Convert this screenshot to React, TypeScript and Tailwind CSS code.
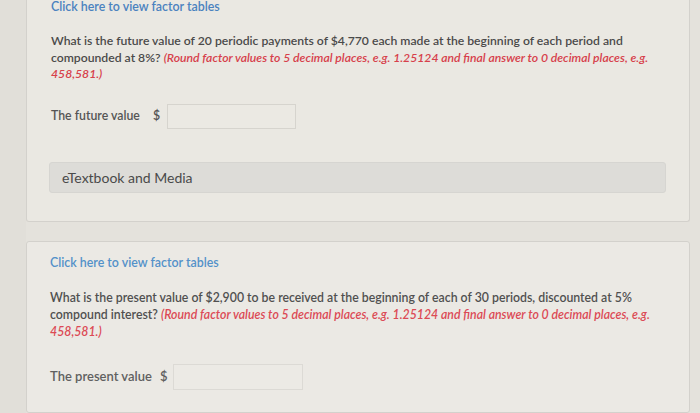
import React from "react";

const font = { fontFamily: "Lato, 'Open Sans', sans-serif" };

export default function App() {
  return (
    <div
      className="w-[700px] h-[413px] overflow-hidden bg-[#e4e2dc] flex"
      style={font}
    >
      <div className="w-[26px] shrink-0 bg-[#e1dfd9]" />
      <div className="w-[664px] shrink-0 flex flex-col">
        {/* Card 1 */}
        <div className="-mt-[6px] h-[228px] border border-t-0 border-[#d3d1cc] rounded-b-[3px] bg-[#eae8e2] pl-[24px] pr-[23px] flex flex-col">
          <div className="text-[12.4px] leading-[16px] font-semibold text-[#4b82bf] mt-[5px]">
            Click here to view factor tables
          </div>
          <div className="mt-[18px] text-[12.2px] leading-[16.5px] font-semibold text-[#4a4a4a] w-[600px]">
            What is the future value of 20 periodic payments of $4,770 each made at the beginning of each period and compounded at 8%?{" "}
            <span className="italic text-[#d7404b]">
              (Round factor values to 5 decimal places, e.g. 1.25124 and final answer to 0 decimal places, e.g. 458,581.)
            </span>
          </div>
          <div className="mt-[21px] flex items-center">
            <span className="text-[12.3px] font-semibold text-[#555555] w-[102px]">The future value</span>
            <span className="text-[12.3px] font-semibold text-[#555555] w-[14px]">$</span>
            <div className="w-[129px] h-[25px] border border-[#d6d4ce] bg-[#ebe9e3]" />
          </div>
          <div className="mt-[33px] -ml-[2px] w-[617px] h-[31px] rounded-[3px] bg-[#dddcd8] border border-[#d6d5d1] flex items-center pl-[12px]">
            <span className="text-[14px] text-[#4a4a4a]">eTextbook and Media</span>
          </div>
        </div>
        {/* Card 2 */}
        <div className="mt-[19px] h-[172px] border border-[#d3d1cc] rounded-[3px] bg-[#ebe9e4] pl-[23px] pr-[23px] flex flex-col">
          <div className="mt-[13px] text-[12.4px] leading-[16px] font-semibold text-[#5391c9]">
            Click here to view factor tables
          </div>
          <div className="mt-[18px] text-[12.3px] leading-[17px] font-semibold text-[#505050] w-[610px]">
            What is the present value of $2,900 to be received at the beginning of each of 30 periods, discounted at 5% compound interest?{" "}
            <span className="italic text-[#dc4a55]">
              (Round factor values to 5 decimal places, e.g. 1.25124 and final answer to 0 decimal places, e.g. 458,581.)
            </span>
          </div>
          <div className="mt-[24px] flex items-center">
            <span className="text-[13px] font-semibold text-[#606060] w-[110px]">The present value</span>
            <span className="text-[13px] font-semibold text-[#606060] w-[13px]">$</span>
            <div className="w-[130px] h-[26px] border border-[#dcdad5] bg-[#eceae5]" />
          </div>
        </div>
      </div>
    </div>
  );
}
